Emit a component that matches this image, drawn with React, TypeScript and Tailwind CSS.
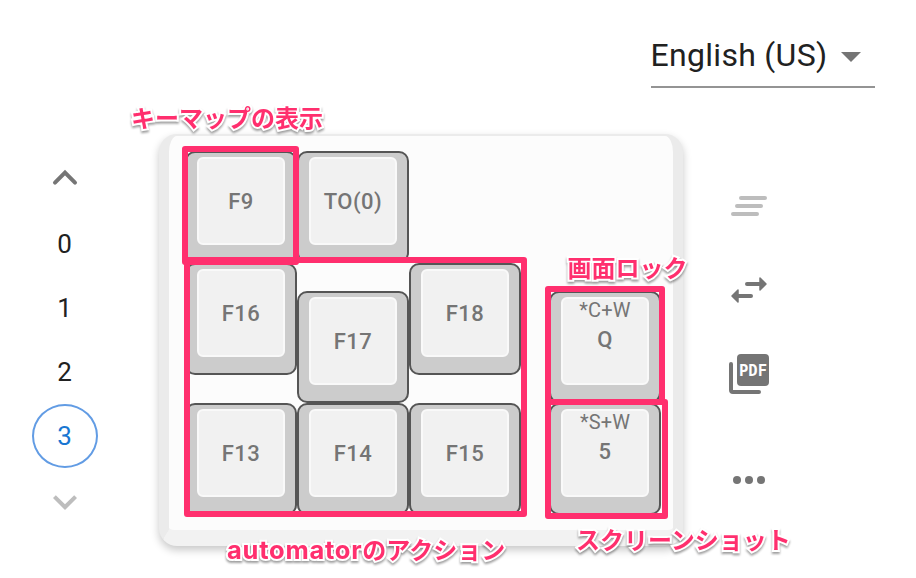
import React from 'react';

type KeyProps = { label: string; mod?: string };

function Key({ label, mod }: KeyProps) {
  return (
    <div className="h-28 w-28 shrink-0 rounded-[10px] border-2 border-[#555555] bg-[#cccccc] px-[10px] pt-1">
      <div
        className={`flex h-[88px] w-[88px] flex-col items-center rounded-md border-2 border-[#f9f9f9] bg-[#f1f1f1] text-[#757575] ${mod ? '' : 'justify-center pt-[2px]'}`}
      >
        {mod && <span className="-mt-[2px] h-[27px] text-[20px] leading-[26px] tracking-[0.15px] whitespace-nowrap">{mod}</span>}
        <span className="text-[22px] leading-8 font-medium tracking-[0.5px] whitespace-nowrap">{label}</span>
      </div>
    </div>
  );
}

function Note({ className, children }: { className: string; children: React.ReactNode }) {
  return (
    <span
      className={`absolute text-[24px] leading-[30px] font-bold whitespace-nowrap text-[#ff2f6e] [font-family:'Noto_Sans_CJK_JP',sans-serif] [-webkit-text-stroke:4px_white] [paint-order:stroke_fill] [filter:drop-shadow(0_2px_1px_rgb(0_0_0/0.38))] ${className}`}
    >
      {children}
    </span>
  );
}

function Layers() {
  return (
    <nav className="flex w-[66px] flex-col items-center pt-[154px] text-[26px] text-[#212121]">
      <svg width="48" height="48" viewBox="0 0 24 24" fill="none" stroke="#757575" strokeWidth="2" strokeLinecap="round">
        <path d="M7 14.3 12 9.3l5 5" />
      </svg>
      <div className="mt-[10px] flex h-16 items-center pr-px">0</div>
      <div className="flex h-16 items-center pr-px">1</div>
      <div className="flex h-16 items-center pr-px">2</div>
      <div className="flex h-16 w-[66px] items-center justify-center rounded-[50%] border-2 border-[#629ce4] pr-px text-[#1976d2]">3</div>
      <svg className="mt-[10px]" width="48" height="48" viewBox="0 0 24 24" fill="#bdbdbd">
        <path d="M16.59 8.59 12 13.17 7.41 8.59 6 10l6 6 6-6z" />
      </svg>
    </nav>
  );
}

function Keyboard() {
  return (
    <main className="ml-[61px] mt-[134px] flex h-[412px] w-[524px] rounded-[18px] border-x-[10px] border-t-2 border-b-[16px] border-x-[#ebebeb] border-t-[#ebebeb] border-b-[#f2f2f2] bg-[#fcfcfc] pt-[15px] pl-4 shadow-[0_4px_8px_rgba(0,0,0,0.22)]">
      <div className="flex flex-col">
        <Key label="F9" />
        <Key label="F16" />
        <div className="mt-7"><Key label="F13" /></div>
      </div>
      <div className="flex flex-col">
        <Key label="TO(0)" />
        <div className="mt-7"><Key label="F17" /></div>
        <Key label="F14" />
      </div>
      <div className="flex flex-col pt-28">
        <Key label="F18" />
        <div className="mt-7"><Key label="F15" /></div>
      </div>
      <div className="ml-7 flex flex-col pt-[140px]">
        <Key mod="*C+W" label="Q" />
        <Key mod="*S+W" label="5" />
      </div>
    </main>
  );
}

function Tools() {
  return (
    <aside className="flex w-[48px] flex-col items-center pt-[94px]">
      <svg width="48" height="48" viewBox="0 0 48 48" stroke="#bdbdbd" strokeWidth="4" strokeLinecap="round">
        <path d="M16 16h24M12 24h24M8 32h24" />
      </svg>
      <svg className="mt-9" width="48" height="48" viewBox="0 0 48 48" fill="#757575" stroke="#757575" strokeLinecap="round" strokeLinejoin="round">
        <path d="M22 18h14M26 30H13" strokeWidth="4" />
        <path d="M35 12v12l6-6zM13 24v12l-6-6z" strokeWidth="1.5" />
      </svg>
      <svg className="mt-9" width="48" height="48" viewBox="0 0 48 48" fill="#757575">
        <rect x="12" y="4" width="32" height="32" rx="4" />
        <path d="M6 14v26a2 2 0 0 0 2 2h26" fill="none" stroke="#757575" strokeWidth="4" strokeLinecap="round" />
        <text x="14" y="26" textLength="28" lengthAdjust="spacingAndGlyphs" fontSize="16.5" className="font-bold [font-family:'DejaVu_Sans_Mono',monospace]" fill="#fff">PDF</text>
      </svg>
      <svg className="mt-[58px]" width="48" height="48" viewBox="0 0 48 48" fill="#757575">
        <circle cx="12" cy="24" r="4" />
        <circle cx="24" cy="24" r="4" />
        <circle cx="36" cy="24" r="4" />
      </svg>
    </aside>
  );
}

export default function App() {
  return (
    <div className="relative flex h-[578px] w-[916px] overflow-hidden bg-white pl-8 [font-family:Roboto,sans-serif]">
      <Layers />
      <Keyboard />
      <section className="-ml-8 flex w-[224px] flex-col">
        <div className="flex h-[88px] items-center justify-between border-b-2 border-[#949494] pt-6 pr-[14px] text-[32px] text-[#212121]">
          <span className="-ml-[0.5px] whitespace-nowrap tracking-[0.3px]">English (US)</span>
          <svg className="mt-[3px]" width="20" height="10" viewBox="0 0 20 10" fill="#757575"><path d="M0 0h20L10 10z" /></svg>
        </div>
        <div className="pl-[74px]"><Tools /></div>
      </section>

      <div className="absolute top-[257px] left-[184px] h-[260px] w-[343px] rounded-[3px] border-[6px] border-[#ff2f6e]" />
      <div className="absolute top-[145.5px] left-[182px] h-[119.5px] w-[117px] rounded-[3px] border-[6px] border-[#ff2f6e]" />
      <div className="absolute top-[286px] left-[545px] h-[119px] w-[120px] rounded-[3px] border-[6px] border-[#ff2f6e]" />
      <div className="absolute top-[399px] left-[545px] h-[120px] w-[123px] rounded-[3px] border-[6px] border-[#ff2f6e]" />

      <Note className="top-[102px] left-[131px]">キーマップの表示</Note>
      <Note className="top-[252px] left-[567.5px]">画面ロック</Note>
      <Note className="top-[534px] left-[227px]"><span className="text-[25.5px] tracking-[0.75px] [font-family:Inter,sans-serif]">automator</span>のアクション</Note>
      <Note className="top-[524px] left-[576px]">スクリーンショット</Note>
    </div>
  );
}
